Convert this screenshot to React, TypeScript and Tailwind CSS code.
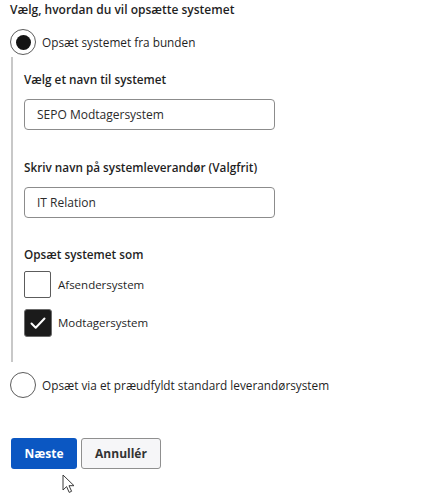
import { useState } from "react";

function Radio({ checked }: { checked: boolean }) {
  return (
    <span className="flex size-[26px] shrink-0 items-center justify-center rounded-full border-[1.5px] border-[#5c5c5c] bg-white">
      {checked && <span className="size-[15px] rounded-full bg-[#141414]" />}
    </span>
  );
}

function Checkbox({ checked }: { checked: boolean }) {
  if (checked) {
    return (
      <span className="flex size-[28px] shrink-0 items-center justify-center rounded-[3px] border-[1.5px] border-[#6b6b6b] bg-[#1b1b1b]">
        <svg width="18" height="18" viewBox="0 0 18 18" fill="none">
          <path d="M2.5 9.5l4.2 4.2L15.5 4.5" stroke="white" strokeWidth="2" strokeLinecap="round" strokeLinejoin="round" />
        </svg>
      </span>
    );
  }
  return <span className="size-[27px] shrink-0 rounded-[2px] border-[1.5px] border-[#5c5c5c] bg-white" />;
}

function TextInput({ value }: { value: string }) {
  return (
    <div className="flex h-[31px] w-[251px] items-center rounded-[4px] border border-[#8c8c8c] bg-white pl-[12px] text-[12px] text-[#2b2b2b]">
      {value}
    </div>
  );
}

export default function App() {
  const [receiver] = useState(true);

  return (
    <div
      className="relative h-[495px] w-[435px] overflow-hidden bg-white pl-[10px] pt-[2px] text-[#1f1f1f]"
      style={{ fontFamily: '"Open Sans", "Noto Sans", sans-serif' }}
    >
      <h2 className="text-[12px] leading-[16px] font-semibold">Vælg, hvordan du vil opsætte systemet</h2>

      <label className="mt-[11px] flex items-center gap-[6px]">
        <Radio checked />
        <span className="text-[11.8px] leading-[16px]">Opsæt systemet fra bunden</span>
      </label>

      <div className="ml-[1px] mt-[2px] border-l-2 border-[#c8c8c8] pb-[25px] pl-[11px] pt-[14px]">
        <div className="text-[11.75px] leading-[16px] font-semibold">Vælg et navn til systemet</div>
        <div className="mt-[12px]">
          <TextInput value="SEPO Modtagersystem" />
        </div>

        <div className="mt-[29px] text-[11.75px] leading-[16px] font-semibold">Skriv navn på systemleverandør (Valgfrit)</div>
        <div className="mt-[12px]">
          <TextInput value="IT Relation" />
        </div>

        <div className="mt-[28px] text-[11.75px] leading-[16px] font-semibold">Opsæt systemet som</div>
        <div className="mt-[9px] flex items-center gap-[7px]">
          <Checkbox checked={false} />
          <span className="text-[11.5px] leading-[16px]">Afsendersystem</span>
        </div>
        <div className="mt-[11px] flex items-center gap-[6px]">
          <Checkbox checked={receiver} />
          <span className="text-[11.5px] leading-[16px]">Modtagersystem</span>
        </div>
      </div>

      <label className="mt-[10px] flex items-center gap-[6px]">
        <Radio checked={false} />
        <span className="text-[11.8px] leading-[16px]">Opsæt via et præudfyldt standard leverandørsystem</span>
      </label>

      <div className="ml-[1px] mt-[40px] flex gap-[4px]">
        <button className="h-[31px] w-[66px] rounded-[3px] bg-[#0b57c2] text-[12px] font-bold text-white">Næste</button>
        <button className="h-[31px] w-[80px] rounded-[3px] border border-[#8f8f8f] bg-[#f6f6f8] text-[12px] font-bold text-[#333]">
          Annullér
        </button>
      </div>

      <svg className="absolute left-[62px] top-[474px]" width="14" height="20" viewBox="0 0 14 20">
        <path d="M1 1v15l3.6-3.4 2.6 5.8 2.4-1.1-2.6-5.6h5L1 1z" fill="white" stroke="#3a3a3a" strokeWidth="1" strokeLinejoin="round" />
      </svg>
    </div>
  );
}
